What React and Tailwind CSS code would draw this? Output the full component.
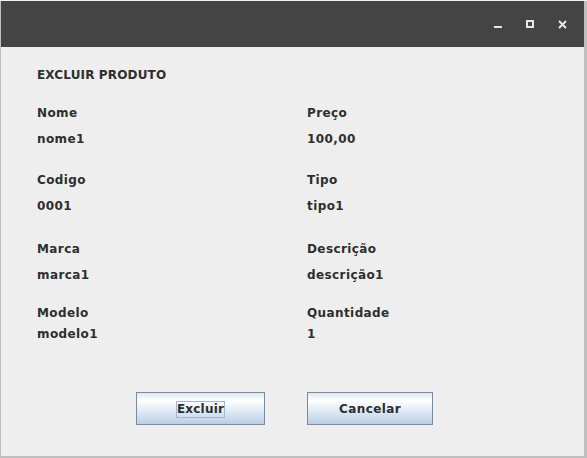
export default function App() {
  const font = { fontFamily: '"DejaVu Sans", sans-serif' };
  return (
    <div
      className="w-[587px] h-[458px] bg-[#bfbfbf] border-t border-t-[#f2f2f2] overflow-hidden"
      style={font}
    >
      <div className="ml-[1px] w-[583px] h-[455px] bg-[#eeeeee] flex flex-col">
        {/* title bar */}
        <div className="h-[46px] bg-[#444444] shrink-0">
          <div className="relative w-full h-full">
            <div className="absolute left-[493px] top-[25px] w-[8px] h-[2px] bg-[#e6e6e6]" />
            <div className="absolute left-[525px] top-[19px] w-[8px] h-[8px] border-2 border-[#e6e6e6]" />
            <svg className="absolute left-[557px] top-[19px]" width="9" height="9" viewBox="0 0 9 9">
              <path d="M1 1 L8 8 M8 1 L1 8" stroke="#e6e6e6" strokeWidth="2" />
            </svg>
          </div>
        </div>
        {/* body */}
        <div className="pl-[36px] text-[12px] leading-[16px] font-bold text-[#2e2e2e] flex flex-col tracking-[0.4px]">
          <div className="mt-[20px] h-[16px] tracking-[0.15px]">EXCLUIR PRODUTO</div>

          <div className="mt-[22px] flex h-[16px]">
            <div className="w-[270px]">Nome</div>
            <div>Preço</div>
          </div>
          <div className="mt-[10px] flex h-[16px]">
            <div className="w-[270px]">nome1</div>
            <div>100,00</div>
          </div>

          <div className="mt-[25px] flex h-[16px]">
            <div className="w-[270px]">Codigo</div>
            <div>Tipo</div>
          </div>
          <div className="mt-[10px] flex h-[16px]">
            <div className="w-[270px]">0001</div>
            <div>tipo1</div>
          </div>

          <div className="mt-[27px] flex h-[16px]">
            <div className="w-[270px]">Marca</div>
            <div>Descrição</div>
          </div>
          <div className="mt-[10px] flex h-[16px]">
            <div className="w-[270px]">marca1</div>
            <div>descrição1</div>
          </div>

          <div className="mt-[22px] flex h-[16px]">
            <div className="w-[270px]">Modelo</div>
            <div>Quantidade</div>
          </div>
          <div className="mt-[5px] flex h-[16px]">
            <div className="w-[270px]">modelo1</div>
            <div>1</div>
          </div>

          <div className="mt-[50px] flex">
            <div className="ml-[99px] w-[129px] h-[33px] border border-[#7a8ba1] bg-[linear-gradient(#dde8f3,#ffffff_25%,#b8cfe5)] flex items-center justify-center pt-[1px]">
              <span className="border border-[#a3b8cc] leading-[15px] tracking-[0.2px]">Excluir</span>
            </div>
            <div className="ml-[42px] w-[126px] h-[33px] border border-[#7a8ba1] bg-[linear-gradient(#dde8f3,#ffffff_25%,#b8cfe5)] flex items-center justify-center pt-[1px]">
              <span className="leading-[15px] tracking-[0.4px]">Cancelar</span>
            </div>
          </div>
        </div>
      </div>
    </div>
  );
}
